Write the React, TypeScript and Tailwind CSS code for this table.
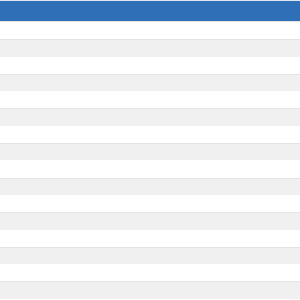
export default function App() {
  const rows = Array.from({ length: 16 });
  return (
    <div className="w-[300px] h-[300px] overflow-hidden bg-white" style={{ fontFamily: '"Liberation Sans", Arial, sans-serif' }}>
      <div className="h-px bg-[#dfe6ef]" />
      <div className="h-[20px] bg-[#2f6fb7]" />
      <div className="h-px bg-[#e2e2e2]" />
      <div className="flex flex-col">
        {rows.map((_, i) => (
          <div
            key={i}
            className={i % 2 === 0 ? "h-[17.3px] bg-white" : "h-[17.3px] bg-[#f0f0f0] border-t border-[#e4e4e4]"}
          />
        ))}
      </div>
    </div>
  );
}
